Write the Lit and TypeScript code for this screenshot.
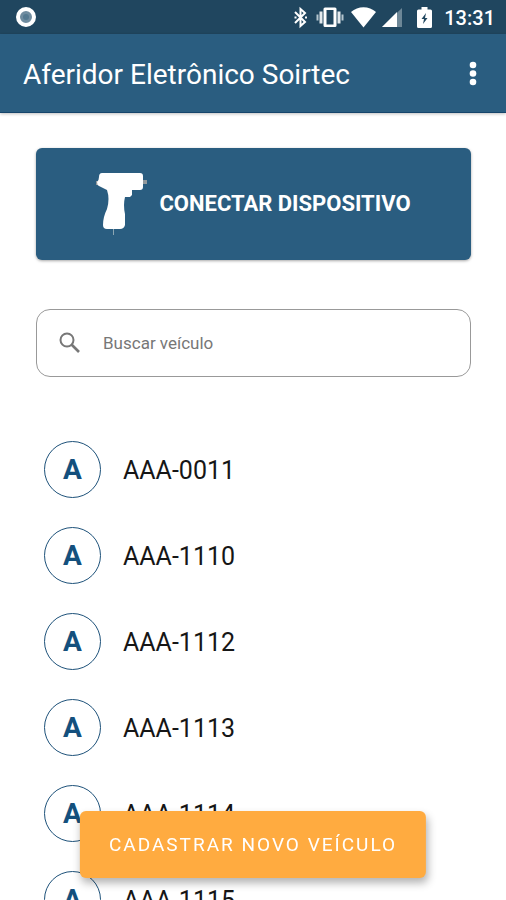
import { LitElement, html, css } from "lit";
import { customElement, property, state } from "lit/decorators.js";

@customElement("status-bar")
class StatusBar extends LitElement {
  static styles = css`
    :host {
      display: flex;
      align-items: center;
      justify-content: space-between;
      height: 34px;
      padding: 0 11px 0 15px;
      background: #20465f;
      color: #fff;
      fill: currentColor;
    }
    svg {
      display: block;
    }
    .icons {
      display: flex;
      align-items: center;
    }
    .clock {
      margin-left: 12px;
      padding-top: 2px;
      font-size: 20px;
      line-height: 24px;
      font-weight: 500;
    }
  `;

  render() {
    return html`
      <svg width="22" height="22" viewBox="0 0 22 22" aria-hidden="true">
        <circle cx="11" cy="11" r="8" fill="#6f8c9f" stroke="#fff" stroke-width="4" />
        <circle cx="11" cy="11" r="3" fill="#547990" />
      </svg>
      <div class="icons">
        <svg width="140" height="34" viewBox="-8 0 140 34" aria-hidden="true">
          <path
            d="M-5 12L5 22L0.500 26V9L5 13L-5 23"
            fill="none"
            stroke="#fff"
            stroke-width="2"
          />
          <path d="M-5.500 16.500h2v2h-2zM5 16.500h2v2h-2z" />
          <path
            fill-rule="evenodd"
            d="M25 7.500h10a1.500 1.500 0 0 1 1.500 1.500v16.500a1.500 1.500 0 0 1-1.500 1.500h-10a1.500 1.500 0 0 1-1.500-1.500v-16.500a1.500 1.500 0 0 1 1.500-1.500zM26.500 10v14.500h7v-14.500z"
          />
          <path d="M19.500 11.500h3v12h-3zM37.500 11.500h3v12h-3z" fill="#e3eaee" />
          <path d="M16.500 14.500h2v6h-2zM41.500 14.500h2v6h-2z" fill="#b4c5cf" />
          <path d="M51 12C58 5.500 69 5.500 76 12L63.500 27.500z" />
          <path d="M102 8v19H82z" fill="#6d8797" />
          <path d="M97 12v15H82z" />
          <path
            fill-rule="evenodd"
            d="M121.500 7h6v2.500h3a1.500 1.500 0 0 1 1.500 1.500v15.500a1.500 1.500 0 0 1-1.500 1.500h-12a1.500 1.500 0 0 1-1.500-1.500v-15.500a1.500 1.500 0 0 1 1.500-1.500h3zM126 13l-4.500 6h2.500l-1 5 4.500-6h-2.500z"
          />
        </svg>
        <span class="clock">13:31</span>
      </div>
    `;
  }
}

@customElement("vehicle-row")
class VehicleRow extends LitElement {
  static styles = css`
    :host {
      display: flex;
      align-items: center;
      gap: 22px;
    }
    .initial {
      box-sizing: border-box;
      width: 57px;
      height: 57px;
      border: 1px solid #1e527a;
      border-radius: 50%;
      color: #14507d;
      font-size: 28px;
      line-height: 55px;
      font-weight: 700;
      text-align: center;
    }
    .plate {
      padding-top: 2px;
      color: #161616;
      font-size: 25px;
      line-height: 32px;
    }
  `;

  @property() plate = "";

  render() {
    return html`
      <span class="initial" aria-hidden="true">${this.plate.charAt(0)}</span>
      <span class="plate">${this.plate}</span>
    `;
  }
}

@customElement("app-root")
class AppRoot extends LitElement {
  static styles = css`
    :host {
      display: flex;
      flex-direction: column;
      height: 100vh;
      overflow: hidden;
      background: #fff;
      font-family: Roboto, "Noto Sans", sans-serif;
    }
    button,
    input {
      font-family: inherit;
    }
    status-bar,
    .toolbar {
      flex: none;
    }
    .toolbar {
      display: flex;
      align-items: center;
      justify-content: space-between;
      box-sizing: border-box;
      height: 79px;
      padding: 0 20px 0 23px;
      background: #2a5d80;
      border-bottom: 1px solid #16456b;
      box-shadow: 0 1px 3px rgba(0, 0, 0, 0.25);
      color: #fff;
    }
    h1 {
      margin: 0;
      padding-top: 4px;
      font-size: 28px;
      line-height: 32px;
      font-weight: 400;
    }
    .menu {
      display: flex;
      padding: 0;
      border: 0;
      background: none;
      fill: #fff;
    }
    main {
      flex: 1;
      min-height: 0;
      overflow: hidden;
      padding: 35px 35px 0 36px;
    }
    .connect {
      display: flex;
      align-items: center;
      justify-content: center;
      gap: 11px;
      width: 100%;
      height: 112px;
      padding: 0;
      border: 0;
      border-radius: 6px;
      background: #2a5d80;
      box-shadow: 0 1px 3px rgba(0, 0, 0, 0.35);
      color: #fff;
      font-size: 22px;
      line-height: 28px;
      font-weight: 700;
    }
    .search {
      display: flex;
      align-items: center;
      gap: 22px;
      box-sizing: border-box;
      height: 68px;
      margin-top: 49px;
      padding: 0 22px;
      border: 1px solid #999;
      border-radius: 14px;
      color: #777;
    }
    .search svg {
      flex: none;
    }
    .search input {
      flex: 1;
      min-width: 0;
      padding: 0;
      border: 0;
      outline: 0;
      background: none;
      color: #333;
      font-size: 17px;
      line-height: 24px;
    }
    .search input::placeholder {
      color: #777;
      opacity: 1;
    }
    ul {
      display: flex;
      flex-direction: column;
      gap: 29px;
      margin: 64px 0 0;
      padding: 0 8px;
      list-style: none;
    }
    .add {
      position: fixed;
      bottom: 22px;
      left: 50%;
      transform: translateX(-50%);
      height: 67px;
      padding: 0 29px;
      border: 0;
      border-radius: 6px;
      background: #ffab40;
      box-shadow: 2px 5px 8px rgba(0, 0, 0, 0.3);
      color: #fff;
      font-size: 19px;
      line-height: 24px;
      letter-spacing: 2px;
      white-space: nowrap;
    }
  `;

  @state() private query = "";

  private plates = ["AAA-0011", "AAA-1110", "AAA-1112", "AAA-1113", "AAA-1114", "AAA-1115"];

  private onSearch(e: Event) {
    this.query = (e.target as HTMLInputElement).value.toUpperCase();
  }

  render() {
    return html`
      <status-bar></status-bar>
      <header class="toolbar">
        <h1>Aferidor Eletrônico Soirtec</h1>
        <button class="menu" aria-label="Menu">
          <svg width="26" height="26" viewBox="0 0 26 26" aria-hidden="true">
            <circle cx="13" cy="5" r="3.300" />
            <circle cx="13" cy="13.500" r="3.300" />
            <circle cx="13" cy="22" r="3.300" />
          </svg>
        </button>
      </header>
      <main>
        <button class="connect">
          <svg width="52" height="64" viewBox="0 0 52 64" aria-hidden="true">
            <path d="M0 9h4v4H0zM46 8h5v4h-5z" fill="#93999c" />
            <path d="M17.500 57v6" stroke="#8ca6b3" stroke-width="1" />
            <path
              d="M6 1H44Q47 1 47 4V15Q47 18 44 18H36V23L34 25H29Q27 33 29 42L29 53Q28 57 24 57H11Q7 57 7 53Q7 45 11 37Q14 27 11 18L3 14Q1 13 1 10Q3 8 3 5Q3 1 6 1Z"
              fill="#fff"
            />
          </svg>
          <span>CONECTAR DISPOSITIVO</span>
        </button>
        <label class="search">
          <svg width="22" height="22" viewBox="0 0 22 22" aria-hidden="true">
            <circle cx="8" cy="8" r="6.500" fill="none" stroke="currentColor" stroke-width="2" />
            <path d="M12.500 12.500L20 20" stroke="currentColor" stroke-width="2.600" />
          </svg>
          <input
            type="text"
            placeholder="Buscar veículo"
            aria-label="Buscar veículo"
            @input=${this.onSearch}
          />
        </label>
        <ul>
          ${this.plates
            .filter((plate) => plate.includes(this.query))
            .map((plate) => html`<li><vehicle-row .plate=${plate}></vehicle-row></li>`)}
        </ul>
      </main>
      <button class="add">CADASTRAR NOVO VEÍCULO</button>
    `;
  }
}
